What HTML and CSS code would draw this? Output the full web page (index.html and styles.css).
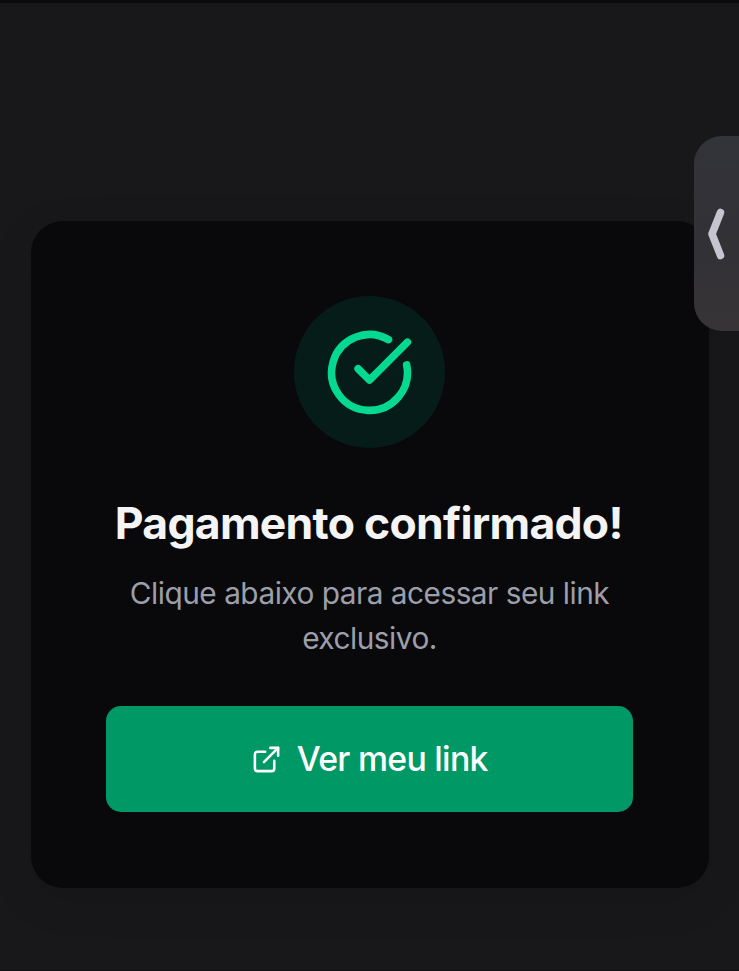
FILE: index.html
```
<!DOCTYPE html>
<html lang="pt-BR">
<head>
<meta charset="utf-8">
<meta name="viewport" content="width=device-width, initial-scale=1">
<title>Pagamento confirmado</title>
<link rel="stylesheet" href="styles.css">
</head>
<body>
<main class="page">
  <section class="card">
    <div class="status">
      <svg class="status-icon" viewBox="0 0 24 24" aria-hidden="true">
        <path d="M21.801 10A10 10 0 1 1 17 3.335"/>
        <path d="m9 11 3 3L22 4"/>
      </svg>
    </div>
    <h1 class="title">Pagamento confirmado!</h1>
    <p class="message">Clique abaixo para acessar seu link exclusivo.</p>
    <a class="button" href="#">
      <svg class="button-icon" viewBox="0 0 24 24" aria-hidden="true">
        <path d="M15 3h6v6"/>
        <path d="M10 14 21 3"/>
        <path d="M18 13v6a2 2 0 0 1-2 2H5a2 2 0 0 1-2-2V8a2 2 0 0 1 2-2h6"/>
      </svg>
      <span class="button-label">Ver meu link</span>
    </a>
  </section>
  <aside class="drawer">
    <svg class="drawer-icon" viewBox="0 0 18 54" aria-hidden="true">
      <path d="M13.5 5.5 5 27 13.5 48.5"/>
    </svg>
  </aside>
</main>
</body>
</html>
```
FILE: styles.css
```
* {
  box-sizing: border-box;
}

body {
  margin: 0;
  background: #18181a;
  font-family: Inter, "Liberation Sans", sans-serif;
}

.page {
  position: relative;
  height: 971px;
  padding: 217.5px 30.5px 0;
  overflow: hidden;
  border-top: 3px solid #0a0a0c;
  border-bottom: 1px solid #121214;
}

.card {
  display: flex;
  flex-direction: column;
  align-items: center;
  height: 667px;
  padding: 75.5px 75.5px 75px;
  border-radius: 32px;
  background: #09090b;
  box-shadow: 0 12px 44px rgba(0, 0, 0, 0.1);
}

.status {
  display: grid;
  place-items: center;
  flex: none;
  width: 151.5px;
  height: 152px;
  border-radius: 50%;
  background: #061c18;
}

.status-icon {
  width: 91px;
  height: 91px;
  fill: none;
  stroke: #05d890;
  stroke-width: 2;
  stroke-linecap: round;
  stroke-linejoin: round;
}

.title {
  margin: 45px 0 0;
  padding-right: 1.5px;
  color: #f4f4f5;
  font-size: 44.5px;
  font-weight: 700;
  line-height: 61px;
  letter-spacing: -0.72px;
  white-space: nowrap;
}

.message {
  margin: 16.5px 0 0;
  color: #9c9eaa;
  font-size: 29.8px;
  line-height: 45.5px;
  letter-spacing: -0.5px;
  text-align: center;
}

.button {
  display: flex;
  align-items: center;
  justify-content: center;
  gap: 14.5px;
  flex: none;
  width: 527px;
  height: 106px;
  margin-top: 44.5px;
  border-radius: 15px;
  background: #009966;
  color: #fff;
  font-size: 33.8px;
  font-weight: 500;
  letter-spacing: -0.72px;
  text-decoration: none;
}

.button-label {
  padding-bottom: 2px;
}

.button-icon {
  width: 31px;
  height: 31px;
  fill: none;
  stroke: currentColor;
  stroke-width: 2;
  stroke-linecap: round;
  stroke-linejoin: round;
}

.drawer {
  position: absolute;
  top: 133px;
  right: 0;
  display: flex;
  align-items: center;
  width: 45.5px;
  height: 195px;
  padding-left: 13px;
  border-radius: 28px 0 0 28px;
  background: linear-gradient(#33333a, #313136 55%, #383436);
}

.drawer-icon {
  width: 18px;
  height: 54px;
  fill: none;
  stroke: #c6c5cf;
  stroke-width: 7.5;
  stroke-linecap: round;
  stroke-linejoin: round;
}
```
